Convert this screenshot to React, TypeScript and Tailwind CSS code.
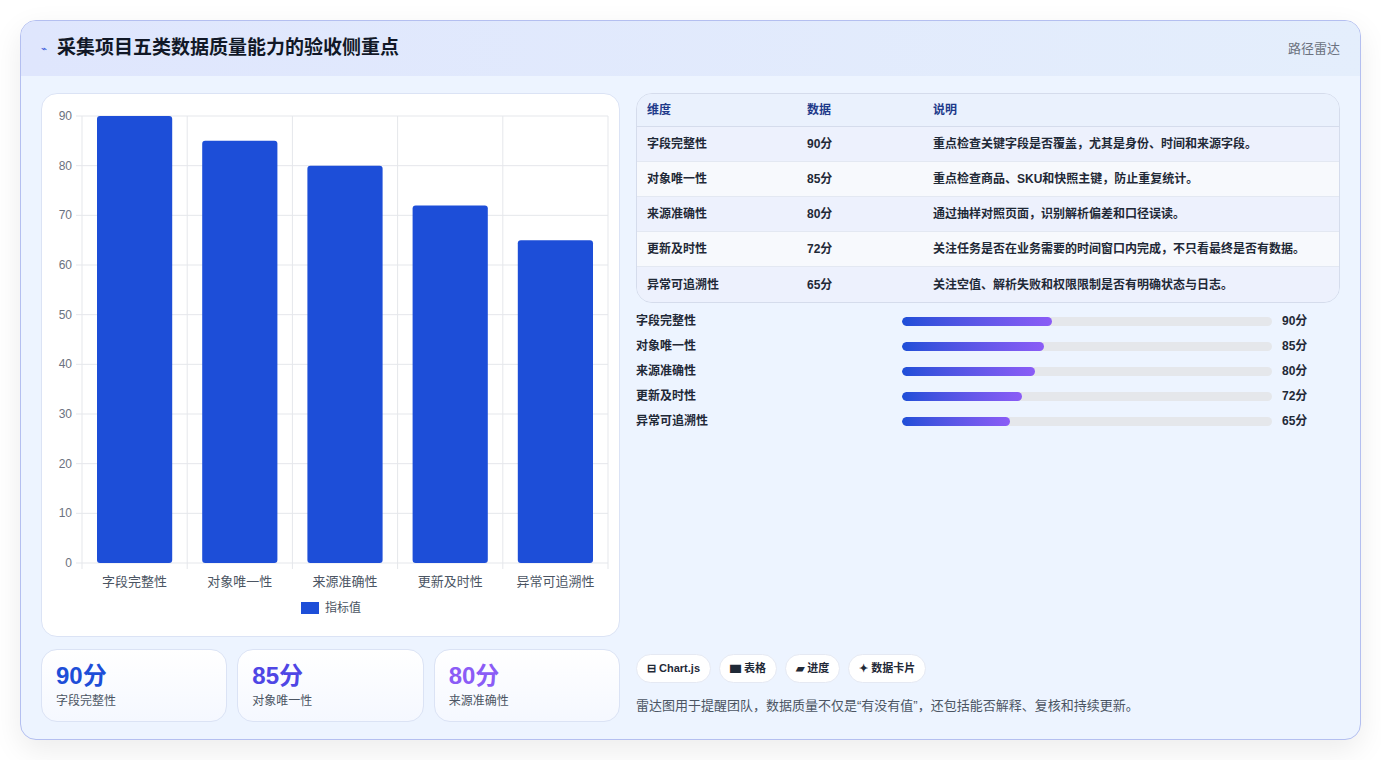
import React from "react";

const data = [
  { name: "字段完整性", v: 90, d: "重点检查关键字段是否覆盖，尤其是身份、时间和来源字段。" },
  { name: "对象唯一性", v: 85, d: "重点检查商品、SKU和快照主键，防止重复统计。" },
  { name: "来源准确性", v: 80, d: "通过抽样对照页面，识别解析偏差和口径误读。" },
  { name: "更新及时性", v: 72, d: "关注任务是否在业务需要的时间窗口内完成，不只看最终是否有数据。" },
  { name: "异常可追溯性", v: 65, d: "关注空值、解析失败和权限限制是否有明确状态与日志。" },
];

function Chart() {
  const W = 578, H = 543;
  const x0 = 40, x1 = 566, yTop = 22, y0 = 469;
  const sy = (v: number) => y0 - (v / 90) * (y0 - yTop);
  const cw = (x1 - x0) / 5;
  return (
    <svg width={W} height={H} style={{ fontFamily: "'Liberation Sans','Noto Sans CJK SC',sans-serif" }}>
      {[0, 10, 20, 30, 40, 50, 60, 70, 80, 90].map((t) => (
        <g key={t}>
          <line x1={x0 - 6} x2={x1} y1={sy(t)} y2={sy(t)} stroke="#e5e7eb" />
          <text x={x0 - 10} y={sy(t) + 4} textAnchor="end" fontSize="12" fill="#6b7280">{t}</text>
        </g>
      ))}
      {[0, 1, 2, 3, 4, 5].map((i) => (
        <line key={i} x1={x0 + i * cw} x2={x0 + i * cw} y1={yTop} y2={y0 + 6} stroke="#e5e7eb" />
      ))}
      {data.map((d, i) => (
        <g key={d.name}>
          <rect x={x0 + i * cw + 15} y={sy(d.v)} width={cw - 30} height={y0 - sy(d.v)} rx="3" fill="#1d4ed8" />
          <text x={x0 + i * cw + cw / 2} y={y0 + 23} textAnchor="middle" fontSize="13" fill="#4b5563">{d.name}</text>
        </g>
      ))}
      <rect x="259" y="508" width="18" height="12" fill="#1d4ed8" />
      <text x="283" y="518" fontSize="12" fill="#4b5563">指标值</text>
    </svg>
  );
}

export default function App() {
  return (
    <div className="min-h-[760px] bg-white p-5" style={{ fontFamily: "'Liberation Sans','Noto Sans CJK SC',sans-serif" }}>
      <div className="h-[720px] rounded-2xl border border-[#b4bff0] bg-[#edf4ff] shadow-[0_10px_30px_rgba(0,0,0,0.08)] overflow-hidden flex flex-col">
        <div className="h-[55px] flex items-center justify-between px-5 bg-gradient-to-r from-[#dfe6fd] to-[#e4eefc]">
          <div className="flex items-center gap-2.5">
            <span className="text-[#3b5bdb] text-[10px]">⌁</span>
            <span className="text-[19px] font-bold text-[#111827]">采集项目五类数据质量能力的验收侧重点</span>
          </div>
          <span className="text-[13px] text-[#6b7280]">路径雷达</span>
        </div>
        <div className="flex gap-4 px-5 pt-[17px]">
          <div className="w-[579px] flex flex-col gap-3">
            <div className="h-[544px] bg-white rounded-2xl border border-[#dbe3f5]"><Chart /></div>
            <div className="grid grid-cols-3 gap-2.5">
              {[["90分", "#1d4ed8"], ["85分", "#4f46e5"], ["80分", "#8b5cf6"]].map(([v, c], i) => (
                <div key={v} className="h-[73px] rounded-2xl border border-[#dbe3f5] bg-gradient-to-b from-white to-[#f5f8ff] px-3.5 pt-2.5">
                  <div className="text-[24px] font-bold leading-8" style={{ color: c }}>{v}</div>
                  <div className="text-[12px] text-[#4b5563]">{data[i].name}</div>
                </div>
              ))}
            </div>
          </div>
          <div className="flex-1 flex flex-col">
            <div className="rounded-2xl border border-[#d5dcec] overflow-hidden text-[12px]">
              <div className="h-[33px] flex items-center bg-[#eaf1fd] text-[#1e3a8a] font-bold border-b border-[#d5dcec]">
                <div className="w-[170px] pl-2.5">维度</div><div className="w-[126px]">数据</div><div>说明</div>
              </div>
              {data.map((d, i) => (
                <div key={d.name} className={`h-[35px] flex items-center text-[#1f2937] font-semibold ${i % 2 ? "bg-[#f7f9fd]" : "bg-[#edf1fd]"} ${i < 4 ? "border-b border-[#e3e8f2]" : ""}`}>
                  <div className="w-[170px] pl-2.5">{d.name}</div><div className="w-[126px]">{d.v}分</div><div>{d.d}</div>
                </div>
              ))}
            </div>
            <div className="mt-[12px] flex flex-col gap-[13px] text-[12px] font-semibold text-[#1f2937]">
              {data.map((d) => (
                <div key={d.name} className="flex items-center h-[12px]">
                  <div className="w-[266px]">{d.name}</div>
                  <div className="w-[370px] h-[9px] rounded-full bg-[#e5e7eb] overflow-hidden">
                    <div className="h-full rounded-full bg-gradient-to-r from-[#1d4ed8] to-[#8b5cf6]" style={{ width: `${d.v * 0.45}%` }} />
                  </div>
                  <div className="ml-2.5 font-bold">{d.v}分</div>
                </div>
              ))}
            </div>
            <div className="mt-[227px] flex gap-2 text-[11px] font-bold text-[#1f2937]">
              {["⊟ Chart.js", "▆ 表格", "▰ 进度", "✦ 数据卡片"].map((t) => (
                <span key={t} className="h-[29px] px-2.5 flex items-center rounded-full bg-white border border-[#e5e9f3]">{t}</span>
              ))}
            </div>
            <div className="mt-[13px] text-[13px] text-[#4b5563]">雷达图用于提醒团队，数据质量不仅是“有没有值”，还包括能否解释、复核和持续更新。</div>
          </div>
        </div>
      </div>
    </div>
  );
}
